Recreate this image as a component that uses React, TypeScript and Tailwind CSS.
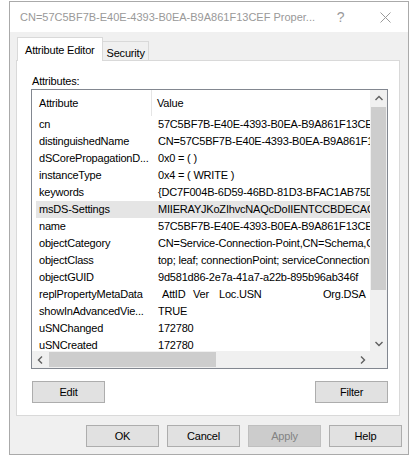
const rows: { name: string; value: string }[] = [
  { name: "cn", value: "57C5BF7B-E40E-4393-B0EA-B9A861F13CEF" },
  { name: "distinguishedName", value: "CN=57C5BF7B-E40E-4393-B0EA-B9A861F13CEF,CN=Server" },
  { name: "dSCorePropagationD...", value: "0x0 = ( )" },
  { name: "instanceType", value: "0x4 = ( WRITE )" },
  { name: "keywords", value: "{DC7F004B-6D59-46BD-81D3-BFAC1AB75D4E}" },
  { name: "msDS-Settings", value: "MIIERAYJKoZIhvcNAQcDoIIENTCCBDECAQIxggGs" },
  { name: "name", value: "57C5BF7B-E40E-4393-B0EA-B9A861F13CEF" },
  { name: "objectCategory", value: "CN=Service-Connection-Point,CN=Schema,CN=Configuration" },
  { name: "objectClass", value: "top; leaf; connectionPoint; serviceConnectionPoint" },
  { name: "objectGUID", value: "9d581d86-2e7a-41a7-a22b-895b96ab346f" },
  { name: "replPropertyMetaData", value: "" },
  { name: "showInAdvancedVie...", value: "TRUE" },
  { name: "uSNChanged", value: "172780" },
  { name: "uSNCreated", value: "172780" },
];

function Chevron({ dir }: { dir: "up" | "down" | "left" | "right" }) {
  const d = {
    up: "M1.5 6 L5 2.5 L8.5 6",
    down: "M1.5 4 L5 7.5 L8.5 4",
    left: "M6 1.5 L2.5 5 L6 8.5",
    right: "M4 1.5 L7.5 5 L4 8.5",
  }[dir];
  return (
    <svg width="10" height="10" viewBox="0 0 10 10">
      <path d={d} fill="none" stroke="#606060" strokeWidth="1.4" />
    </svg>
  );
}

function Btn({ label, disabled = false }: { label: string; disabled?: boolean }) {
  return (
    <div
      className={
        disabled
          ? "w-[73px] h-[22px] flex items-center justify-center border border-[#bfbfbf] bg-[#cccccc] text-[#838383]"
          : "w-[73px] h-[22px] flex items-center justify-center border border-[#adadad] bg-[#e1e1e1] text-black"
      }
    >
      {label}
    </div>
  );
}

export default function App() {
  return (
    <div className="min-h-screen bg-white pl-[9px] pt-[1px] font-['Liberation_Sans',Arial,sans-serif] text-[11px] tracking-[-0.2px] text-black">
      <div className="w-[400px] h-[454px] border border-[#aaaaaa] bg-[#f0f0f0] flex flex-col">
        {/* title bar */}
        <div className="h-[30px] bg-white flex items-center">
          <span className="flex-1 pl-[10px] text-[#999999] tracking-normal whitespace-nowrap">
            CN=57C5BF7B-E40E-4393-B0EA-B9A861F13CEF Proper...
          </span>
          <div className="w-[45px] h-full flex items-center justify-center text-[#9a9a9a] text-[14px]">?</div>
          <div className="w-[45px] h-full flex items-center justify-center">
            <svg width="11" height="11" viewBox="0 0 11 11">
              <path d="M0.5 0.5 L10.5 10.5 M10.5 0.5 L0.5 10.5" stroke="#9a9a9a" strokeWidth="1" />
            </svg>
          </div>
        </div>

        <div className="pl-[6px] pr-[8px] pt-[5px]">
          {/* tabs */}
          <div className="flex items-end h-[24px] relative z-10 pl-[1px]">
            <div className="h-[24px] px-[7px] pt-[4px] border border-b-0 border-[#d9d9d9] bg-white whitespace-nowrap">
              Attribute Editor
            </div>
            <div className="h-[20px] pl-[4px] pr-[3px] pt-[3px] border border-l-0 border-[#d9d9d9] bg-[#f0f0f0] whitespace-nowrap">
              Security
            </div>
          </div>

          {/* tab panel */}
          <div className="-mt-[1px] h-[356px] border border-[#d9d9d9] bg-white pt-[13px] pl-[14px]">
            <div className="h-[14px] leading-[14px] pl-[1px]">Attributes:</div>
            <div className="mt-[1px] w-[357px] h-[280px] border border-[#828790] flex flex-col">
              <div className="flex h-[261px]">
                <div className="w-[338px] overflow-hidden">
                  <div className="h-[26px] flex items-center">
                    <div className="w-[120px] h-full flex items-center pl-[7px] border-r border-[#e5e5e5]">Attribute</div>
                    <div className="pl-[5px]">Value</div>
                  </div>
                  {rows.map((r) => (
                    <div
                      key={r.name}
                      className={
                        r.name === "msDS-Settings"
                          ? "ml-[4px] h-[17px] flex items-center whitespace-nowrap bg-[#e5e5e5]"
                          : "ml-[4px] h-[17px] flex items-center whitespace-nowrap"
                      }
                    >
                      <div className="w-[116px] shrink-0 pl-[3px] overflow-hidden">{r.name}</div>
                      {r.name === "replPropertyMetaData" ? (
                        <div className="pl-[10px] flex">
                          <span className="w-[31px]">AttID</span>
                          <span className="w-[26px]">Ver</span>
                          <span className="w-[104px]">Loc.USN</span>
                          <span>Org.DSA</span>
                        </div>
                      ) : (
                        <div className="pl-[6px]">{r.value}</div>
                      )}
                    </div>
                  ))}
                </div>
                {/* vertical scrollbar */}
                <div className="w-[17px] bg-[#f0f0f0] flex flex-col">
                  <div className="h-[17px] flex items-center justify-center">
                    <Chevron dir="up" />
                  </div>
                  <div className="h-[183px] mx-[1px] bg-[#cdcdcd]" />
                  <div className="flex-1" />
                  <div className="h-[17px] flex items-center justify-center">
                    <Chevron dir="down" />
                  </div>
                </div>
              </div>
              {/* horizontal scrollbar */}
              <div className="h-[17px] flex bg-[#f0f0f0]">
                <div className="w-[17px] flex items-center justify-center">
                  <Chevron dir="left" />
                </div>
                <div className="w-[167px] my-[1px] bg-[#cdcdcd]" />
                <div className="flex-1" />
                <div className="w-[17px] flex items-center justify-center">
                  <Chevron dir="right" />
                </div>
                <div className="w-[17px]" />
              </div>
            </div>
            <div className="mt-[12px] w-[357px] flex justify-between pl-[1px]">
              <Btn label="Edit" />
              <Btn label="Filter" />
            </div>
          </div>
        </div>

        {/* dialog buttons */}
        <div className="mt-[9px] pr-[6px] flex justify-end gap-[8px]">
          <Btn label="OK" />
          <Btn label="Cancel" />
          <Btn label="Apply" disabled />
          <Btn label="Help" />
        </div>
      </div>
    </div>
  );
}
